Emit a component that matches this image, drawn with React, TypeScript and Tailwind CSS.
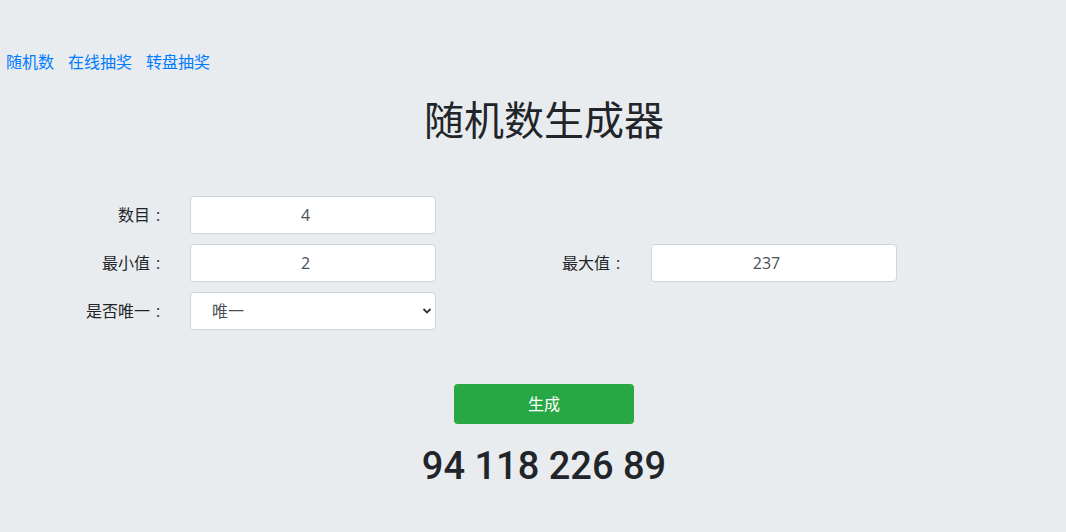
import React from "react";

const navLinks = ["随机数", "在线抽奖", "转盘抽奖"];

function Field({ value }: { value: string }) {
  return (
    <input
      className="h-[38px] w-[246px] rounded-[4px] border border-[#ced4da] bg-white pl-3 pr-[27px] text-center text-[16px] text-[#495057] outline-none"
      defaultValue={value}
    />
  );
}

function Label({ text, width }: { text: string; width: string }) {
  return (
    <label className={width + " text-right"}>
      {text}
      <span className="inline-block w-[16px] text-center">:</span>
    </label>
  );
}

export default function App() {
  return (
    <div
      className="min-h-screen bg-[#e9ecef] text-[#212529]"
      style={{ fontFamily: '"Open Sans", "Noto Sans CJK SC", sans-serif' }}
    >
      <nav className="flex gap-[14px] pl-[6px] pt-[50px] text-[16px] leading-[24px]">
        {navLinks.map((link) => (
          <a key={link} href="#" className="text-[#007bff]">
            {link}
          </a>
        ))}
      </nav>

      <h1 className="mt-[22px] pl-[22px] text-center text-[40px] font-normal leading-[48px]">
        随机数生成器
      </h1>

      <div className="mt-[52px] flex flex-col gap-[10px] text-[16px]">
        <div className="flex items-center">
          <Label text="数目" width="w-[166px]" />
          <div className="ml-[24px]">
            <Field value="4" />
          </div>
        </div>
        <div className="flex items-center">
          <Label text="最小值" width="w-[166px]" />
          <div className="ml-[24px]">
            <Field value="2" />
          </div>
          <Label text="最大值" width="w-[190px]" />
          <div className="ml-[25px]">
            <Field value="237" />
          </div>
        </div>
        <div className="flex items-center">
          <Label text="是否唯一" width="w-[166px]" />
          <div className="relative ml-[24px]">
            <select className="h-[38px] w-[246px] appearance-none rounded-[4px] border border-[#ced4da] bg-white pl-[21px] text-[16px] text-[#495057] outline-none">
              <option>唯一</option>
              <option>不唯一</option>
            </select>
            <svg
              className="pointer-events-none absolute right-[4px] top-[15px]"
              width="10"
              height="8"
              viewBox="0 0 10 8"
            >
              <path d="M1.5 2 L5 5.5 L8.5 2" fill="none" stroke="#333" strokeWidth="1.8" />
            </svg>
          </div>
        </div>
      </div>

      <div className="mt-[54px] flex flex-col items-center pl-[22px]">
        <button className="h-[40px] w-[180px] rounded-[4px] bg-[#28a745] text-[16px] text-white">
          生成
        </button>
        <div
          className="mt-[18px] text-[38px] font-medium leading-[48px]"
          style={{ fontFamily: "Roboto, sans-serif" }}
        >
          94 118 226 89
        </div>
      </div>
    </div>
  );
}
